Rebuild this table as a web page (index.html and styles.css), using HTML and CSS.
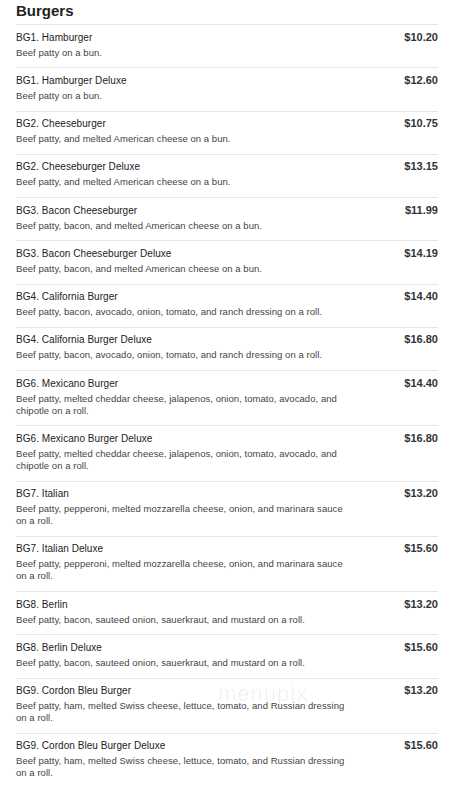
FILE: index.html
```
<!DOCTYPE html>
<html>
<head>
<meta charset="utf-8">
<link rel="stylesheet" href="styles.css">
</head>
<body>
<div class="menu">
  <h2 class="title">Burgers</h2>
  <div class="list">
    <div class="item"><div class="name">BG1. Hamburger</div><div class="price">$10.20</div><div class="desc">Beef patty on a bun.</div></div>
    <div class="item"><div class="name">BG1. Hamburger Deluxe</div><div class="price">$12.60</div><div class="desc">Beef patty on a bun.</div></div>
    <div class="item"><div class="name">BG2. Cheeseburger</div><div class="price">$10.75</div><div class="desc">Beef patty, and melted American cheese on a bun.</div></div>
    <div class="item"><div class="name">BG2. Cheeseburger Deluxe</div><div class="price">$13.15</div><div class="desc">Beef patty, and melted American cheese on a bun.</div></div>
    <div class="item"><div class="name">BG3. Bacon Cheeseburger</div><div class="price">$11.99</div><div class="desc">Beef patty, bacon, and melted American cheese on a bun.</div></div>
    <div class="item"><div class="name">BG3. Bacon Cheeseburger Deluxe</div><div class="price">$14.19</div><div class="desc">Beef patty, bacon, and melted American cheese on a bun.</div></div>
    <div class="item"><div class="name">BG4. California Burger</div><div class="price">$14.40</div><div class="desc">Beef patty, bacon, avocado, onion, tomato, and ranch dressing on a roll.</div></div>
    <div class="item"><div class="name">BG4. California Burger Deluxe</div><div class="price">$16.80</div><div class="desc">Beef patty, bacon, avocado, onion, tomato, and ranch dressing on a roll.</div></div>
    <div class="item"><div class="name">BG6. Mexicano Burger</div><div class="price">$14.40</div><div class="desc">Beef patty, melted cheddar cheese, jalapenos, onion, tomato, avocado, and chipotle on a roll.</div></div>
    <div class="item"><div class="name">BG6. Mexicano Burger Deluxe</div><div class="price">$16.80</div><div class="desc">Beef patty, melted cheddar cheese, jalapenos, onion, tomato, avocado, and chipotle on a roll.</div></div>
    <div class="item"><div class="name">BG7. Italian</div><div class="price">$13.20</div><div class="desc">Beef patty, pepperoni, melted mozzarella cheese, onion, and marinara sauce on a roll.</div></div>
    <div class="item"><div class="name">BG7. Italian Deluxe</div><div class="price">$15.60</div><div class="desc">Beef patty, pepperoni, melted mozzarella cheese, onion, and marinara sauce on a roll.</div></div>
    <div class="item"><div class="name">BG8. Berlin</div><div class="price">$13.20</div><div class="desc">Beef patty, bacon, sauteed onion, sauerkraut, and mustard on a roll.</div></div>
    <div class="item"><div class="name">BG8. Berlin Deluxe</div><div class="price">$15.60</div><div class="desc">Beef patty, bacon, sauteed onion, sauerkraut, and mustard on a roll.</div></div>
    <div class="item wm-anchor"><div class="name">BG9. Cordon Bleu Burger</div><div class="price">$13.20</div><div class="desc">Beef patty, ham, melted Swiss cheese, lettuce, tomato, and Russian dressing on a roll.</div><span class="watermark">menupix</span></div>
    <div class="item"><div class="name">BG9. Cordon Bleu Burger Deluxe</div><div class="price">$15.60</div><div class="desc">Beef patty, ham, melted Swiss cheese, lettuce, tomato, and Russian dressing on a roll.</div></div>
  </div>
</div>
</body>
</html>
```
FILE: styles.css
```
html, body {
  margin: 0;
  padding: 0;
  background: #ffffff;
}
body {
  font-family: "Liberation Sans", Arial, sans-serif;
  color: #333333;
}
.menu {
  padding: 2px 16px 0;
}
.title {
  margin: 0 0 4px;
  font-size: 15px;
  line-height: 18px;
  font-weight: bold;
  color: #222222;
}
.list {
  display: flex;
  flex-direction: column;
}
.item {
  display: grid;
  grid-template-columns: 1fr auto;
  padding: 5.5px 0 8.75px;
  border-top: 1px solid #e6e6e6;
}
.name {
  grid-column: 1;
  grid-row: 1;
  font-size: 10px;
  line-height: 14px;
  color: #222222;
  letter-spacing: 0.05px;
}
.price {
  grid-column: 2;
  grid-row: 1;
  font-size: 11px;
  line-height: 13px;
  font-weight: bold;
  color: #333333;
  text-align: right;
}
.desc {
  grid-column: 1 / -1;
  grid-row: 2;
  margin-top: 2px;
  max-width: 331px;
  font-size: 9.5px;
  line-height: 12px;
  letter-spacing: 0.05px;
  color: #444444;
}
.wm-anchor {
  position: relative;
}
.watermark {
  position: absolute;
  left: 202px;
  top: 2px;
  font-size: 22px;
  letter-spacing: 1px;
  color: rgba(0, 0, 0, 0.06);
  pointer-events: none;
}
```
